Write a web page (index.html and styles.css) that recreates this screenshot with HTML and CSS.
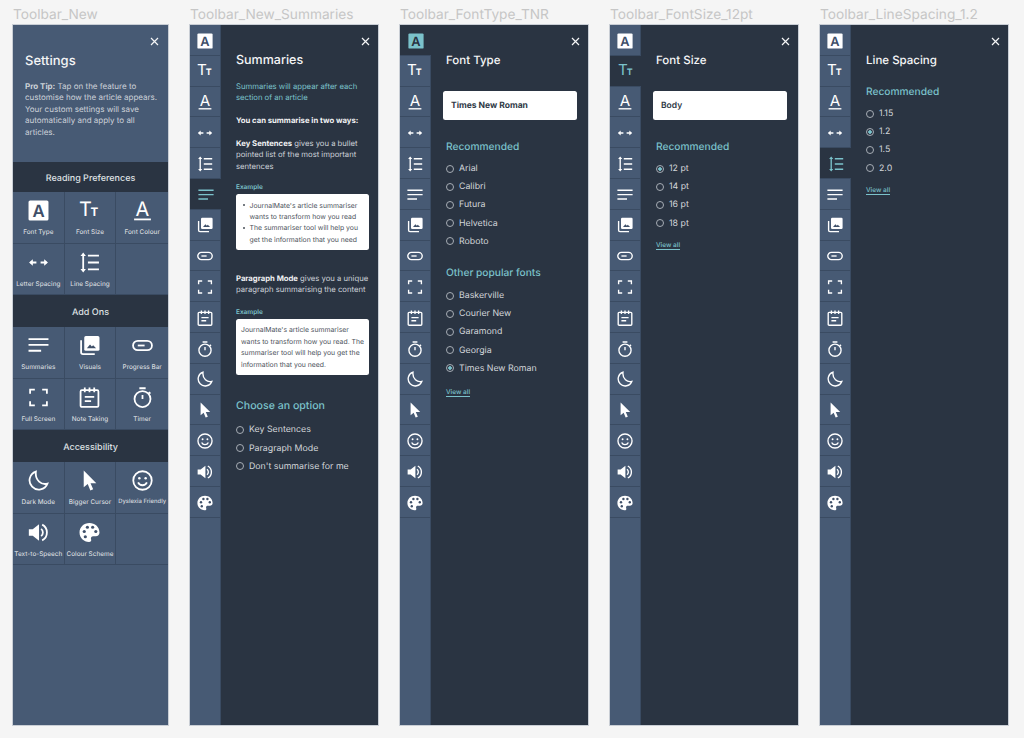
FILE: index.html
```html
<!DOCTYPE html>
<html lang="en">
<head>
    <meta charset="UTF-8">
    <title>Toolbar</title>
    <meta name="viewport" content="width=device-width, initial-scale=1">
    <link rel="stylesheet" href="styles.css">
</head>
<body>
    <svg class="sprite" aria-hidden="true">
        <symbol id="i-type" viewBox="0 0 20 20"><rect x="0.5" y="0.5" width="19" height="19" rx="1.5" fill="currentColor"/><text x="10" y="16.2" text-anchor="middle" class="t-a">A</text></symbol>
        <symbol id="i-size" viewBox="0 0 20 20"><text x="0" y="15.5" class="t-big" fill="currentColor">T</text><text x="11" y="15.5" class="t-small" fill="currentColor">T</text></symbol>
        <symbol id="i-colour" viewBox="0 0 20 20"><text x="10" y="15" text-anchor="middle" class="t-line" fill="currentColor">A</text><path d="M2 18.5h16" class="ln"/></symbol>
        <symbol id="i-letter" viewBox="0 0 20 20"><path d="M2.5 10H8M12 10h5.5" class="ln"/><path d="M1 10l3.6-3v6zM19 10l-3.6-3v6z" fill="currentColor"/></symbol>
        <symbol id="i-line" viewBox="0 0 20 20"><path d="M4 3v14M8.5 3.5H19M8.5 10H19M8.5 16.5H19" class="ln"/><path d="M4 0.5l2.6 3.4H1.4zM4 19.5l2.6-3.4H1.4z" fill="currentColor"/></symbol>
        <symbol id="i-sum" viewBox="0 0 20 20"><path d="M0.5 4h19M0.5 9.5h19M0.5 15h12" class="ln"/></symbol>
        <symbol id="i-visual" viewBox="0 0 20 20"><path d="M2 5v11.5A1.8 1.8 0 0 0 3.8 18.3H15" class="ln"/><rect x="5" y="1" width="14.5" height="14" rx="1.5" fill="currentColor"/><path d="M7.5 12.5l3-3.5 1.7 2 1.3-1.2 2.8 2.7z" class="ink"/></symbol>
        <symbol id="i-bar" viewBox="0 0 20 20"><rect x="1" y="5.5" width="18" height="9" rx="4.5" class="ln"/><path d="M5.5 10h6.5" class="ln"/></symbol>
        <symbol id="i-full" viewBox="0 0 20 20"><path d="M2 6.5V2.5H6.5M13.5 2.5H18V6.5M18 13.5V17.5H13.5M6.5 17.5H2V13.5" class="ln"/></symbol>
        <symbol id="i-note" viewBox="0 0 20 20"><rect x="1.5" y="3" width="17" height="16" rx="1.2" class="ln"/><path d="M5.5 0.5v4.5M10 0.5v4.5M14.5 0.5v4.5M5.5 9.5h9M5.5 13.5h6" class="ln"/></symbol>
        <symbol id="i-timer" viewBox="0 0 20 20"><circle cx="10" cy="11.5" r="7.6" class="ln"/><path d="M7 1.2h6M10 11.5V7.5M16 4.8l1.5 1.5" class="ln"/></symbol>
        <symbol id="i-moon" viewBox="0 0 20 20"><path d="M7.5 1.5a8.8 8.8 0 1 0 11 11.5c-5.5 1.5-12-3-11-11.5z" class="ln"/></symbol>
        <symbol id="i-cursor" viewBox="0 0 20 20"><path d="M4.5 0.5V16.5L8.3 13.3L10.8 19.5L13.5 18.4L11 12.5H16.5z" fill="currentColor"/></symbol>
        <symbol id="i-smile" viewBox="0 0 20 20"><circle cx="10" cy="10" r="8.8" class="ln"/><circle cx="7" cy="7.8" r="1.2" fill="currentColor"/><circle cx="13" cy="7.8" r="1.2" fill="currentColor"/><path d="M5.8 11.8a4.6 4.6 0 0 0 8.4 0" class="ln"/></symbol>
        <symbol id="i-speak" viewBox="0 0 20 20"><path d="M0.8 7H4.5L10.5 2.2V17.8L4.5 13H0.8z" fill="currentColor"/><path d="M12.5 6.5a4.5 4.5 0 0 1 0 7" class="ln"/><path d="M13.5 2.5a8.5 8.5 0 0 1 0 15" class="ln"/></symbol>
        <symbol id="i-palette" viewBox="0 0 20 20"><path d="M10 1C4.5 1 0.5 5 0.5 10c0 5 4 9 9 9 2 0 2.5-1.2 2-2.5-.6-1.7.3-3 2-3h2.5c2 0 3.5-1.3 3.5-3.5C19.5 4.5 15 1 10 1z" fill="currentColor"/><circle cx="5" cy="9" r="1.5" class="ink"/><circle cx="8" cy="5" r="1.5" class="ink"/><circle cx="13" cy="5" r="1.5" class="ink"/><circle cx="16" cy="9" r="1.5" class="ink"/><circle cx="6" cy="14" r="1.5" class="ink"/></symbol>
    </svg>

    <div class="board">
        <!-- settings -->
        <div class="column column-first">
            <div class="frame-name">Toolbar_New</div>
            <div class="frame settings">
                <div class="intro">
                    <svg class="close"><path d="M1 1l7 7M8 1l-7 7"/></svg>
                    <h2>Settings</h2>
                    <p><b>Pro Tip:</b> Tap on the feature to customise how the article appears. Your custom settings will save automatically and apply to all articles.</p>
                </div>

                <div class="band band-first">Reading Preferences</div>
                <div class="tools">
                    <div class="tool"><svg class="icon"><use href="#i-type"/></svg>Font Type</div>
                    <div class="tool"><svg class="icon"><use href="#i-size"/></svg>Font Size</div>
                    <div class="tool"><svg class="icon"><use href="#i-colour"/></svg>Font Colour</div>
                    <div class="tool"><svg class="icon"><use href="#i-letter"/></svg>Letter Spacing</div>
                    <div class="tool"><svg class="icon"><use href="#i-line"/></svg>Line Spacing</div>
                    <div class="tool"></div>
                </div>

                <div class="band">Add Ons</div>
                <div class="tools">
                    <div class="tool"><svg class="icon"><use href="#i-sum"/></svg>Summaries</div>
                    <div class="tool"><svg class="icon"><use href="#i-visual"/></svg>Visuals</div>
                    <div class="tool"><svg class="icon"><use href="#i-bar"/></svg>Progress Bar</div>
                    <div class="tool"><svg class="icon"><use href="#i-full"/></svg>Full Screen</div>
                    <div class="tool"><svg class="icon"><use href="#i-note"/></svg>Note Taking</div>
                    <div class="tool"><svg class="icon"><use href="#i-timer"/></svg>Timer</div>
                </div>

                <div class="band">Accessibility</div>
                <div class="tools">
                    <div class="tool"><svg class="icon"><use href="#i-moon"/></svg>Dark Mode</div>
                    <div class="tool"><svg class="icon"><use href="#i-cursor"/></svg>Bigger Cursor</div>
                    <div class="tool tool-tight"><svg class="icon"><use href="#i-smile"/></svg>Dyslexia Friendly</div>
                    <div class="tool"><svg class="icon"><use href="#i-speak"/></svg>Text-to-Speech</div>
                    <div class="tool"><svg class="icon"><use href="#i-palette"/></svg>Colour Scheme</div>
                    <div class="tool"></div>
                </div>
            </div>
        </div>

        <!-- summaries -->
        <div class="column">
            <div class="frame-name">Toolbar_New_Summaries</div>
            <div class="frame split">
                <div class="rail">
                    <div class="rail-item"><svg><use href="#i-type"/></svg></div>
                    <div class="rail-item"><svg><use href="#i-size"/></svg></div>
                    <div class="rail-item"><svg><use href="#i-colour"/></svg></div>
                    <div class="rail-item"><svg><use href="#i-letter"/></svg></div>
                    <div class="rail-item"><svg><use href="#i-line"/></svg></div>
                    <div class="rail-item active"><svg><use href="#i-sum"/></svg></div>
                    <div class="rail-item"><svg><use href="#i-visual"/></svg></div>
                    <div class="rail-item"><svg><use href="#i-bar"/></svg></div>
                    <div class="rail-item"><svg><use href="#i-full"/></svg></div>
                    <div class="rail-item"><svg><use href="#i-note"/></svg></div>
                    <div class="rail-item"><svg><use href="#i-timer"/></svg></div>
                    <div class="rail-item"><svg><use href="#i-moon"/></svg></div>
                    <div class="rail-item"><svg><use href="#i-cursor"/></svg></div>
                    <div class="rail-item"><svg><use href="#i-smile"/></svg></div>
                    <div class="rail-item"><svg><use href="#i-speak"/></svg></div>
                    <div class="rail-item"><svg><use href="#i-palette"/></svg></div>
                </div>
                <div class="pane">
                    <svg class="close"><path d="M1 1l7 7M8 1l-7 7"/></svg>
                    <h2 class="title-big">Summaries</h2>
                    <p class="lead">Summaries will appear after each section of an article</p>
                    <p class="copy copy-head"><b>You can summarise in two ways:</b></p>
                    <p class="copy copy-key"><b>Key Sentences</b> gives you a bullet pointed list of the most important sentences</p>
                    <div class="example-label">Example</div>
                    <ul class="example">
                        <li>JournalMate's article summariser wants to transform how you read</li>
                        <li>The summariser tool will help you get the information that you need</li>
                    </ul>
                    <p class="copy copy-para"><b>Paragraph Mode</b> gives you a unique paragraph summarising the content</p>
                    <div class="example-label">Example</div>
                    <div class="example">JournalMate's article summariser wants to transform how you read. The summariser tool will help you get the information that you need.</div>
                    <h3 class="choose">Choose an option</h3>
                    <div class="option"><span class="radio"></span>Key Sentences</div>
                    <div class="option"><span class="radio"></span>Paragraph Mode</div>
                    <div class="option"><span class="radio"></span>Don't summarise for me</div>
                </div>
            </div>
        </div>

        <!-- font type -->
        <div class="column">
            <div class="frame-name">Toolbar_FontType_TNR</div>
            <div class="frame split">
                <div class="rail">
                    <div class="rail-item active"><svg><use href="#i-type"/></svg></div>
                    <div class="rail-item"><svg><use href="#i-size"/></svg></div>
                    <div class="rail-item"><svg><use href="#i-colour"/></svg></div>
                    <div class="rail-item"><svg><use href="#i-letter"/></svg></div>
                    <div class="rail-item"><svg><use href="#i-line"/></svg></div>
                    <div class="rail-item"><svg><use href="#i-sum"/></svg></div>
                    <div class="rail-item"><svg><use href="#i-visual"/></svg></div>
                    <div class="rail-item"><svg><use href="#i-bar"/></svg></div>
                    <div class="rail-item"><svg><use href="#i-full"/></svg></div>
                    <div class="rail-item"><svg><use href="#i-note"/></svg></div>
                    <div class="rail-item"><svg><use href="#i-timer"/></svg></div>
                    <div class="rail-item"><svg><use href="#i-moon"/></svg></div>
                    <div class="rail-item"><svg><use href="#i-cursor"/></svg></div>
                    <div class="rail-item"><svg><use href="#i-smile"/></svg></div>
                    <div class="rail-item"><svg><use href="#i-speak"/></svg></div>
                    <div class="rail-item"><svg><use href="#i-palette"/></svg></div>
                </div>
                <div class="pane">
                    <svg class="close"><path d="M1 1l7 7M8 1l-7 7"/></svg>
                    <h2>Font Type</h2>
                    <div class="picked picked-bold">Times New Roman</div>
                    <h3>Recommended</h3>
                    <div class="option"><span class="radio"></span>Arial</div>
                    <div class="option"><span class="radio"></span>Calibri</div>
                    <div class="option"><span class="radio"></span>Futura</div>
                    <div class="option"><span class="radio"></span>Helvetica</div>
                    <div class="option"><span class="radio"></span>Roboto</div>
                    <h3 class="second">Other popular fonts</h3>
                    <div class="option"><span class="radio"></span>Baskerville</div>
                    <div class="option"><span class="radio"></span>Courier New</div>
                    <div class="option"><span class="radio"></span>Garamond</div>
                    <div class="option"><span class="radio"></span>Georgia</div>
                    <div class="option"><span class="radio on"></span>Times New Roman</div>
                    <a class="view-all view-all-far">View all</a>
                </div>
            </div>
        </div>

        <!-- font size -->
        <div class="column">
            <div class="frame-name">Toolbar_FontSize_12pt</div>
            <div class="frame split">
                <div class="rail">
                    <div class="rail-item"><svg><use href="#i-type"/></svg></div>
                    <div class="rail-item active"><svg><use href="#i-size"/></svg></div>
                    <div class="rail-item"><svg><use href="#i-colour"/></svg></div>
                    <div class="rail-item"><svg><use href="#i-letter"/></svg></div>
                    <div class="rail-item"><svg><use href="#i-line"/></svg></div>
                    <div class="rail-item"><svg><use href="#i-sum"/></svg></div>
                    <div class="rail-item"><svg><use href="#i-visual"/></svg></div>
                    <div class="rail-item"><svg><use href="#i-bar"/></svg></div>
                    <div class="rail-item"><svg><use href="#i-full"/></svg></div>
                    <div class="rail-item"><svg><use href="#i-note"/></svg></div>
                    <div class="rail-item"><svg><use href="#i-timer"/></svg></div>
                    <div class="rail-item"><svg><use href="#i-moon"/></svg></div>
                    <div class="rail-item"><svg><use href="#i-cursor"/></svg></div>
                    <div class="rail-item"><svg><use href="#i-smile"/></svg></div>
                    <div class="rail-item"><svg><use href="#i-speak"/></svg></div>
                    <div class="rail-item"><svg><use href="#i-palette"/></svg></div>
                </div>
                <div class="pane">
                    <svg class="close"><path d="M1 1l7 7M8 1l-7 7"/></svg>
                    <h2>Font Size</h2>
                    <div class="picked">Body</div>
                    <h3>Recommended</h3>
                    <div class="option"><span class="radio on"></span>12 pt</div>
                    <div class="option"><span class="radio"></span>14 pt</div>
                    <div class="option"><span class="radio"></span>16 pt</div>
                    <div class="option"><span class="radio"></span>18 pt</div>
                    <a class="view-all">View all</a>
                </div>
            </div>
        </div>

        <!-- line spacing -->
        <div class="column">
            <div class="frame-name">Toolbar_LineSpacing_1.2</div>
            <div class="frame split">
                <div class="rail">
                    <div class="rail-item"><svg><use href="#i-type"/></svg></div>
                    <div class="rail-item"><svg><use href="#i-size"/></svg></div>
                    <div class="rail-item"><svg><use href="#i-colour"/></svg></div>
                    <div class="rail-item"><svg><use href="#i-letter"/></svg></div>
                    <div class="rail-item active"><svg><use href="#i-line"/></svg></div>
                    <div class="rail-item"><svg><use href="#i-sum"/></svg></div>
                    <div class="rail-item"><svg><use href="#i-visual"/></svg></div>
                    <div class="rail-item"><svg><use href="#i-bar"/></svg></div>
                    <div class="rail-item"><svg><use href="#i-full"/></svg></div>
                    <div class="rail-item"><svg><use href="#i-note"/></svg></div>
                    <div class="rail-item"><svg><use href="#i-timer"/></svg></div>
                    <div class="rail-item"><svg><use href="#i-moon"/></svg></div>
                    <div class="rail-item"><svg><use href="#i-cursor"/></svg></div>
                    <div class="rail-item"><svg><use href="#i-smile"/></svg></div>
                    <div class="rail-item"><svg><use href="#i-speak"/></svg></div>
                    <div class="rail-item"><svg><use href="#i-palette"/></svg></div>
                </div>
                <div class="pane">
                    <svg class="close"><path d="M1 1l7 7M8 1l-7 7"/></svg>
                    <h2>Line Spacing</h2>
                    <h3 class="no-pick">Recommended</h3>
                    <div class="option"><span class="radio"></span>1.15</div>
                    <div class="option"><span class="radio on"></span>1.2</div>
                    <div class="option"><span class="radio"></span>1.5</div>
                    <div class="option"><span class="radio"></span>2.0</div>
                    <a class="view-all">View all</a>
                </div>
            </div>
        </div>
    </div>
</body>
</html>
```

FILE: styles.css
```css
* {
    box-sizing: border-box;
}
body {
    margin: 0;
    height: 738px;
    overflow: hidden;
    background-color: #f5f5f5;
    font-family: Inter, "Liberation Sans", sans-serif;
    color: #cfd3d8;
    text-rendering: geometricPrecision;
}
.sprite {
    display: none;
}
.board {
    display: flex;
    gap: 22px;
    padding: 6px 0 0 13px;
}
.column {
    width: 188px;
}
.column-first {
    width: 155px;
}
.frame-name {
    height: 19px;
    font-size: 13.7px;
    line-height: 19px;
    color: #c6c6c6;
    white-space: nowrap;
}
.frame {
    height: 700px;
    background: #475a74;
    box-shadow: 0 0 0 1px #c9ced5;
    --ink: #3f5069;
}
.split {
    display: flex;
    background: #2a3442;
}
h2 {
    margin: 0;
    font-size: 11.5px;
    line-height: 16px;
    font-weight: 500;
    color: #f4f5f6;
}
h3 {
    margin: 19.5px 0 0;
    font-size: 10.2px;
    line-height: 14px;
    font-weight: 500;
    color: #7bc2cb;
}
p {
    margin: 0;
}
b {
    font-weight: 700;
}
.close {
    display: block;
    width: 9px;
    height: 9px;
    margin-left: auto;
    fill: none;
    stroke: #f4f5f6;
    stroke-width: 1.2;
}

/* settings frame */
.intro {
    height: 137px;
    padding: 12px 9px 0 12px;
}
.intro h2 {
    margin-top: 7px;
    font-size: 13px;
}
.intro p {
    margin-top: 12px;
    font-size: 8px;
    line-height: 11.4px;
    color: #cdd2d9;
}
.band {
    height: 32px;
    padding-top: 1.5px;
    background: #2a3442;
    font-size: 9px;
    line-height: 31px;
    font-weight: 500;
    text-align: center;
    color: #dfe1e4;
}
.band-first {
    height: 30px;
    line-height: 30px;
}
.tools {
    display: grid;
    grid-template-columns: repeat(3, 1fr);
    grid-auto-rows: 51.5px;
}
.tool {
    display: flex;
    flex-direction: column;
    align-items: center;
    padding-top: 8px;
    font-size: 6.4px;
    line-height: 10px;
    font-weight: 500;
    white-space: nowrap;
    color: #d5d9de;
    border-right: 1px solid #3a4b62;
    border-bottom: 1px solid #3a4b62;
}
.tool:nth-child(3n) {
    border-right: none;
}
.tool-tight {
    font-size: 5.9px;
}
.icon {
    width: 21px;
    height: 21px;
    margin-bottom: 6px;
    color: #fff;
}

/* icon parts */
.ln {
    fill: none;
    stroke: currentColor;
    stroke-width: 1.7;
}
.ink {
    fill: var(--ink);
}
.t-a {
    font-size: 16px;
    font-weight: 600;
    fill: var(--ink);
}
.t-big {
    font-size: 19px;
    font-weight: 400;
}
.t-small {
    font-size: 11px;
    font-weight: 700;
}
.t-line {
    font-size: 19px;
    font-weight: 400;
}

/* left rail */
.rail {
    flex: none;
    width: 31px;
    background: #475a74;
    border-right: 1px solid #3a4b62;
}
.rail-item {
    display: flex;
    align-items: center;
    justify-content: center;
    height: 30.8px;
    padding-top: 1.5px;
    color: #fff;
    border-bottom: 1px solid #3a4b62;
}
.rail-item svg {
    width: 16px;
    height: 16px;
}
.rail-item.active {
    margin-right: -1px;
    background: #2a3442;
    color: #7bc2cb;
    --ink: #2a3442;
}

/* right pane */
.pane {
    flex: 1;
    min-width: 0;
    padding: 12px 8px 0 15px;
}
.pane h2 {
    height: 17px;
    margin-top: 6px;
}
.pane .title-big {
    height: 16px;
    margin-top: 7px;
    font-size: 12.5px;
}
.lead {
    margin-top: 12px;
    font-size: 7.7px;
    line-height: 11.4px;
    color: #7bc2cb;
}
.copy {
    font-size: 7.7px;
    line-height: 11.4px;
    color: #cdd2d9;
}
.copy b {
    color: #f1f2f4;
}
.copy-head {
    margin-top: 11px;
}
.copy-key {
    margin-top: 11.6px;
}
.copy-para {
    margin-top: 23px;
}
.example-label {
    margin-top: 11px;
    font-size: 6.5px;
    line-height: 9px;
    font-weight: 600;
    color: #7bc2cb;
}
.copy-para + .example-label {
    margin-top: 12px;
}
.example {
    width: 133px;
    height: 56px;
    margin: 2px 0 0;
    padding: 5.5px 2px 0 5px;
    list-style: none;
    background: #fff;
    border-radius: 2.5px;
    font-size: 6.85px;
    line-height: 11.4px;
    color: #4a5059;
}
ul.example {
    padding-left: 13.5px;
}
ul.example li {
    position: relative;
}
ul.example li::before {
    content: "";
    position: absolute;
    left: -7px;
    top: 4.5px;
    width: 2px;
    height: 2px;
    border-radius: 50%;
    background: #4a5059;
}
.pane .choose {
    margin-top: 24px;
    font-size: 10.6px;
}
.picked {
    display: flex;
    align-items: center;
    width: 134px;
    height: 29px;
    margin: 22px 0 0 -3px;
    padding-left: 8px;
    background: #fff;
    border-radius: 2.5px;
    font-size: 8.5px;
    font-weight: 600;
    color: #2f3946;
}
.picked-bold {
    font-weight: 700;
}
.pane .second {
    margin-top: 16px;
}
.pane .no-pick {
    margin-top: 15.5px;
}
.option {
    display: flex;
    align-items: center;
    gap: 5px;
    height: 18.2px;
    font-size: 8.8px;
    color: #d3d6da;
    white-space: nowrap;
}
h3 + .option {
    margin-top: 6px;
}
.choose + .option {
    margin-top: 8px;
}
.radio {
    flex: none;
    width: 8px;
    height: 8px;
    border: 1px solid #a7adb5;
    border-radius: 50%;
}
.radio.on {
    background: radial-gradient(circle, #7bc2cb 0 1.5px, transparent 2px);
}
.view-all {
    display: block;
    width: max-content;
    margin-top: 9px;
    font-size: 6.5px;
    line-height: 8px;
    font-weight: 500;
    color: #7bc2cb;
    border-bottom: 1px solid #7bc2cb;
}
.view-all-far {
    margin-top: 11px;
}
```
